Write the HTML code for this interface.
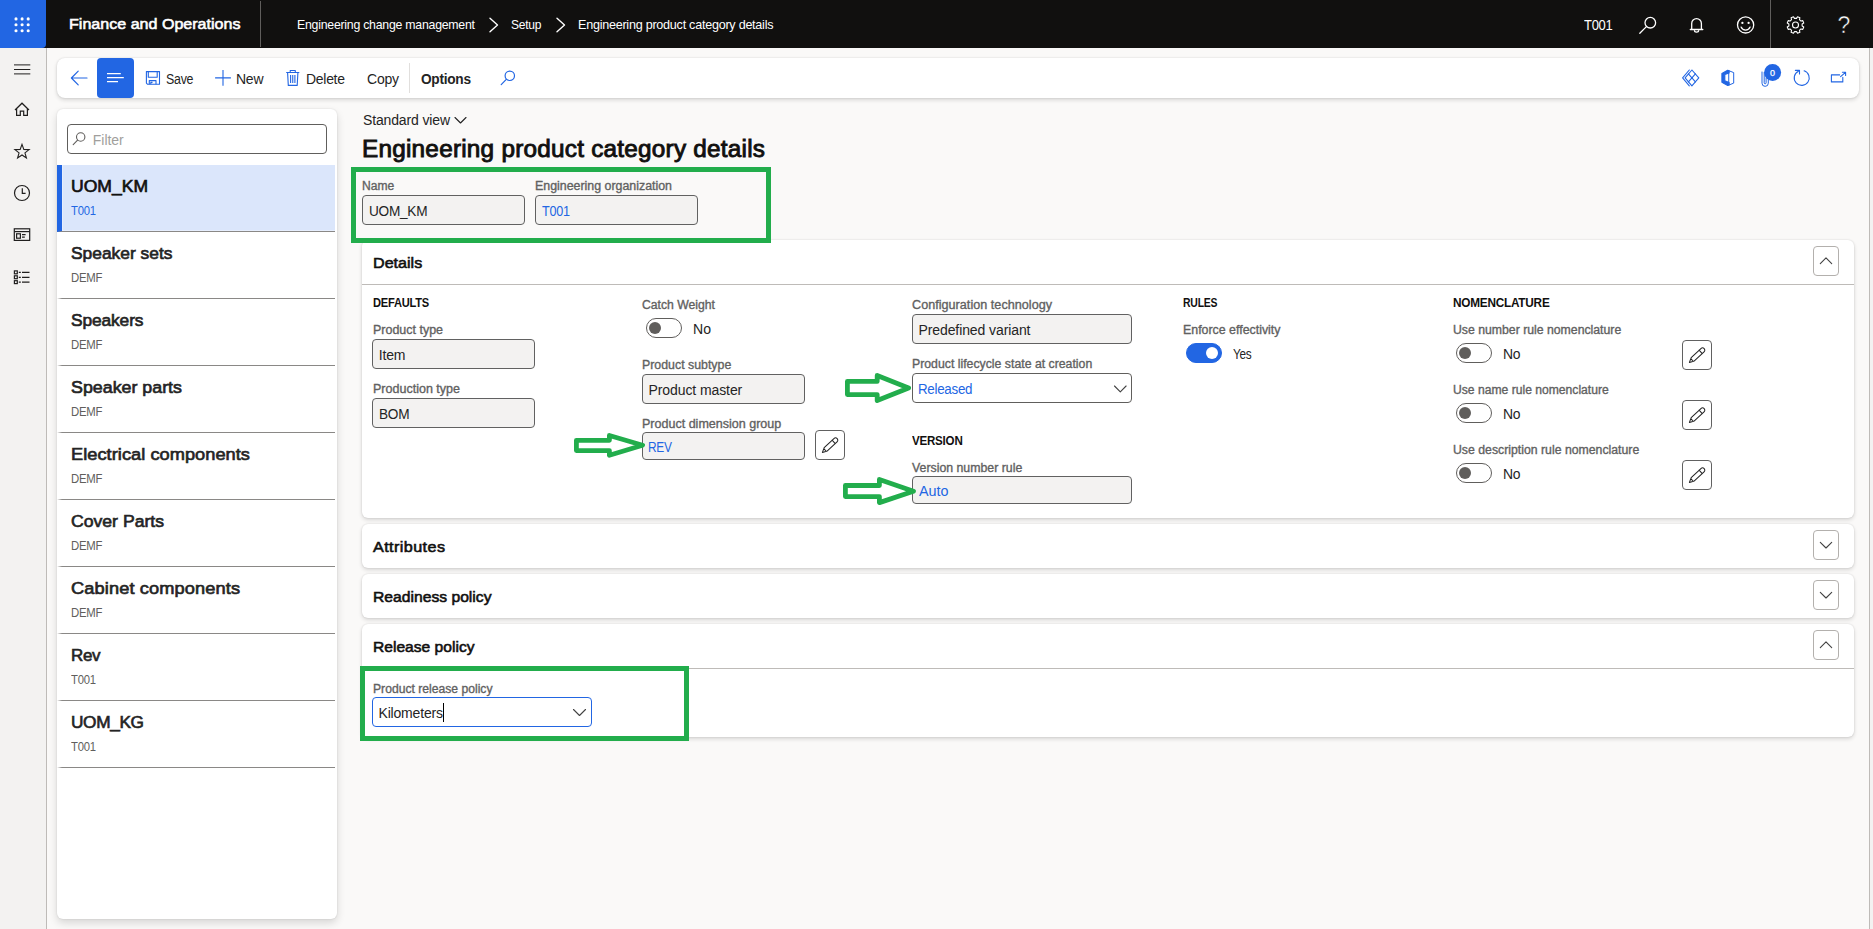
<!DOCTYPE html>
<html lang="en"><head><meta charset="utf-8"><title>Engineering product category details - Finance and Operations</title>
<style>
*{box-sizing:border-box;margin:0;padding:0}
html,body{width:1873px;height:929px;overflow:hidden}
body{position:relative;background:#faf9f8;font-family:"Liberation Sans",sans-serif;color:#242424}
.a{position:absolute}
.t{position:absolute;white-space:pre;display:block}
#hdr{left:0;top:0;width:1873px;height:48px;background:#11100f}
#waffle{left:0;top:0;width:46px;height:48px;background:#2266e3;border-radius:0 0 4px 0}
#nav{left:0;top:48px;width:47px;height:881px;background:#f3f2f1;border-right:1px solid #bebbb8}
#gutter{left:1869px;top:48px;width:4px;height:881px;background:#f3f2f1;border-left:1px solid #bebbb8}
.card{background:#fff;border-radius:6px;box-shadow:0 0 2px rgba(0,0,0,.12),0 2px 4px rgba(0,0,0,.14)}
.inp{border:1px solid #616161;border-radius:4px;background:#f3f2f1}
.cmb{border:1px solid #605e5c;border-radius:4px;background:#fff}
.btn{border:1px solid #616161;border-radius:4px;background:#fff}
.hbtn{border:1px solid #b3b0ad;border-radius:4px;background:#fff;width:26px;height:30px;left:1813px}
.li{left:57px;width:278px;height:67px;border-left:5px solid transparent;border-bottom:1px solid #8a8886}
.li.sel{border-left-color:#2266e3;background:#dbe6fb;box-shadow:inset 1px 0 0 #e6eefd,inset 0 -1px 0 #e6eefd}
.hl{height:1px;background:#bebbb8;left:362px;width:1492px}
.tg{width:36px;height:20px;border-radius:10px;border:1px solid #605e5c;background:#fff}
.tg i{position:absolute;left:2px;top:3px;width:12px;height:12px;border-radius:6px;background:#605e5c}
.tg.on{background:#2266e3;border-color:#2266e3}
.tg.on i{left:19px;background:#fff}
.gbox{border:5px solid #22ad4c}
svg{position:absolute;left:0;top:0;overflow:visible}

</style></head>
<body>
<div class="a" id="hdr"></div>
<div class="a" id="waffle"></div>
<div class="a" style="left:260px;top:1px;width:1px;height:46px;background:#605e5c"></div>
<div class="a" style="left:1770px;top:0;width:1px;height:48px;background:#605e5c"></div>
<div class="a" id="nav"></div>
<div class="a" id="gutter"></div>

<!-- toolbar -->
<div class="a card" style="left:57px;top:58px;width:1802px;height:40px;border-radius:8px"></div>
<div class="a" style="left:97px;top:58px;width:37px;height:40px;background:#2266e3;border-radius:4px"></div>
<div class="a" style="left:409px;top:63px;width:1px;height:30px;background:#e1dfdd"></div>

<!-- list panel -->
<div class="a card" style="left:57px;top:109px;width:280px;height:810px;box-shadow:0 0 2px rgba(0,0,0,.12),0 4px 8px rgba(0,0,0,.14)"></div>
<div class="a" style="left:67px;top:124px;width:260px;height:30px;border:1px solid #605e5c;border-radius:4px;background:#fff"></div>
<div class="a li sel" style="top:165px"></div>
<div class="a li" style="top:232px"></div>
<div class="a li" style="top:299px"></div>
<div class="a li" style="top:366px"></div>
<div class="a li" style="top:433px"></div>
<div class="a li" style="top:500px"></div>
<div class="a li" style="top:567px"></div>
<div class="a li" style="top:634px"></div>
<div class="a li" style="top:701px"></div>

<!-- header fields -->
<div class="a inp" style="left:362px;top:195px;width:163px;height:30px"></div>
<div class="a inp" style="left:535px;top:195px;width:163px;height:30px"></div>

<!-- Details card -->
<div class="a card" style="left:362px;top:240px;width:1492px;height:278px"></div>
<div class="a hl" style="top:284px"></div>
<div class="a hbtn" style="top:246px"></div>
<!-- col1 -->
<div class="a inp" style="left:372px;top:339px;width:163px;height:30px"></div>
<div class="a inp" style="left:372px;top:398px;width:163px;height:30px"></div>
<!-- col2 -->
<div class="a tg" style="left:646px;top:318px"><i></i></div>
<div class="a inp" style="left:642px;top:374px;width:163px;height:30px"></div>
<div class="a inp" style="left:642px;top:432px;width:163px;height:28px"></div>
<div class="a btn" style="left:815px;top:430px;width:30px;height:30px"></div>
<!-- col3 -->
<div class="a inp" style="left:912px;top:314px;width:220px;height:30px"></div>
<div class="a cmb" style="left:912px;top:373px;width:220px;height:30px"></div>
<div class="a inp" style="left:912px;top:476px;width:220px;height:28px"></div>
<!-- col4 -->
<div class="a tg on" style="left:1186px;top:343px"><i></i></div>
<!-- col5 -->
<div class="a tg" style="left:1456px;top:343px"><i></i></div>
<div class="a tg" style="left:1456px;top:403px"><i></i></div>
<div class="a tg" style="left:1456px;top:463px"><i></i></div>
<div class="a btn" style="left:1682px;top:340px;width:30px;height:30px"></div>
<div class="a btn" style="left:1682px;top:400px;width:30px;height:30px"></div>
<div class="a btn" style="left:1682px;top:460px;width:30px;height:30px"></div>

<!-- Attributes / Readiness / Release -->
<div class="a card" style="left:362px;top:524px;width:1492px;height:44px"></div>
<div class="a hbtn" style="top:530px"></div>
<div class="a card" style="left:362px;top:574px;width:1492px;height:44px"></div>
<div class="a hbtn" style="top:580px"></div>
<div class="a card" style="left:362px;top:624px;width:1492px;height:113px"></div>
<div class="a hbtn" style="top:630px"></div>
<div class="a hl" style="top:668px"></div>
<div class="a" style="left:372px;top:697px;width:220px;height:30px;border:1px solid #2266e3;border-radius:4px;background:#fff"></div>
<div class="a" style="left:443px;top:703px;width:1px;height:19px;background:#000"></div>

<!-- green annotation boxes -->
<div class="a gbox" style="left:351px;top:167px;width:420px;height:75.5px"></div>
<div class="a gbox" style="left:360px;top:666px;width:329px;height:75px"></div>

<!-- ICONS -->
<svg width="1873" height="929" viewBox="0 0 1873 929" fill="none">
<!-- waffle -->
<g fill="#fff">
<circle cx="16" cy="18.9" r="1.55"/><circle cx="22.1" cy="18.9" r="1.55"/><circle cx="28.2" cy="18.9" r="1.55"/>
<circle cx="16" cy="24.8" r="1.55"/><circle cx="22.1" cy="24.8" r="1.55"/><circle cx="28.2" cy="24.8" r="1.55"/>
<circle cx="16" cy="30.7" r="1.55"/><circle cx="22.1" cy="30.7" r="1.55"/><circle cx="28.2" cy="30.7" r="1.55"/>
</g>
<!-- breadcrumb chevrons -->
<g stroke="#fff" stroke-width="1.4" stroke-linecap="round" stroke-linejoin="round">
<path d="M490 18.3 L497.5 25 L490 31.7"/>
<path d="M557 18.3 L564.5 25 L557 31.7"/>
</g>
<!-- header icons -->
<g stroke="#fff" stroke-width="1.3" stroke-linecap="round" stroke-linejoin="round">
<circle cx="1650.3" cy="22.7" r="5.3"/><path d="M1646.4 26.6 L1639.8 33.2"/>
<path d="M1691.7 29.4 V23.5 a4.85 4.85 0 0 1 9.7 0 V29.4 M1690.3 29.5 H1702.8"/><path d="M1694.5 30.6 a2.05 1.6 0 0 0 4.1 0"/>
<circle cx="1745.6" cy="24.9" r="8.1"/>
<path d="M1741.1 27.1 a4.9 4.9 0 0 0 9 0"/>
</g>
<g fill="#fff"><circle cx="1742.4" cy="22.9" r="1.15"/><circle cx="1748.6" cy="22.9" r="1.15"/></g>
<!-- gear -->
<g stroke="#fff" stroke-width="1.1" stroke-linejoin="round">
<circle cx="1795.5" cy="25" r="3"/>
<path d="M1802.12 26.02 L1803.75 27.04 L1802.78 29.39 L1800.90 28.96 L1799.46 30.40 L1799.89 32.28 L1797.54 33.25 L1796.52 31.62 L1794.48 31.62 L1793.46 33.25 L1791.11 32.28 L1791.54 30.40 L1790.10 28.96 L1788.22 29.39 L1787.25 27.04 L1788.88 26.02 L1788.88 23.98 L1787.25 22.96 L1788.22 20.61 L1790.10 21.04 L1791.54 19.60 L1791.11 17.72 L1793.46 16.75 L1794.48 18.38 L1796.52 18.38 L1797.54 16.75 L1799.89 17.72 L1799.46 19.60 L1800.90 21.04 L1802.78 20.61 L1803.75 22.96 L1802.12 23.98 Z"/>
</g>
<!-- nav icons -->
<g stroke="#201f1e" stroke-width="1">
<path d="M14 64.9h16.3M14 69.5h16.3M14 73.9h16.3"/>
</g>
<g stroke="#201f1e" stroke-width="1.2" stroke-linejoin="miter">
<path d="M15 110 L22 103.2 L29 110"/>
<path d="M16.6 108.6 V115.4 H20.3 V111.2 H23.7 V115.4 H27.4 V108.6"/>
<path d="M22.00 144.40 L23.82 149.39 L29.13 149.58 L24.95 152.86 L26.41 157.97 L22.00 155.00 L17.59 157.97 L19.05 152.86 L14.87 149.58 L20.18 149.39 Z" stroke-width="1.1"/>
<circle cx="22" cy="193" r="7.5"/>
<path d="M22.3 188.2 V193.3 H25.6"/>
<rect x="14.3" y="228.8" width="15.4" height="11.6"/>
<path d="M14.3 231.6 H29.7"/>
<rect x="16.6" y="233.8" width="3.8" height="4.4"/>
<path d="M22 234.6 H25.6 M22 237.2 H24.8"/>
<rect x="14.4" y="270.9" width="2.9" height="2.9"/><rect x="14.4" y="275.8" width="2.9" height="2.9"/><rect x="14.4" y="280.7" width="2.9" height="2.9"/>
<path d="M18.8 272.4 H20.8 M22 272.4 H29.5 M18.8 277.3 H20.8 M22 277.3 H29.5 M18.8 282.2 H20.8 M22 282.2 H29.5"/>
</g>
<!-- toolbar left icons -->
<g stroke="#2266e3" stroke-width="1.2" stroke-linecap="round" stroke-linejoin="round">
<path d="M87 78 H71.5 M78.2 71.2 L71.4 78 L78.2 84.8"/>
</g>
<g stroke="#fff" stroke-width="1.1">
<path d="M107 73.6 H120.8 M107 77.6 H123.8 M107 81.6 H118"/>
</g>
<g stroke="#2266e3" stroke-width="1.1" stroke-linejoin="round">
<path d="M146.4 71.6 H159.5 V84.3 H147.6 L146.4 83.1 Z"/>
<path d="M148.3 71.6 V77.3 H157.2 V71.6"/>
<path d="M149.3 84.3 V80.6 H156 V84.3 M150.8 84.3 V82.4 H152.5"/>
<path d="M223 70 V85.8 M215.1 77.9 H230.9"/>
<path d="M286.2 72.5 H299.3 M290.2 72.3 V70.5 H295.3 V72.3 M287.6 72.6 L288.3 85.4 H297.2 L297.9 72.6 M290.6 75 V83 M292.75 75 V83 M294.9 75 V83"/>
</g>
<!-- toolbar search -->
<g stroke="#2266e3" stroke-width="1.2" stroke-linecap="round"><circle cx="509.8" cy="75.8" r="4.7"/><path d="M506.3 79.4 L501.2 84.6"/></g>
<!-- filter search -->
<g stroke="#605e5c" stroke-width="1.1" stroke-linecap="round"><circle cx="80.7" cy="137" r="4.2"/><path d="M77.6 140.1 L73.2 144.6"/></g>
<!-- toolbar right icons -->
<g stroke="#2266e3" stroke-width="1.1" stroke-linejoin="round" stroke-linecap="round">
<path d="M1689.3 70 L1682.6 77.9 L1689.3 85.8"/>
<path d="M1691.9 70 L1698.8 77.9 L1691.9 85.8 L1685.1 77.9 Z"/>
<path d="M1688.4 73.9 L1695.4 81.9 M1695.4 73.9 L1688.4 81.9"/>
<path d="M1721.9 73.6 L1727.7 70.3 L1729.1 70.8 V73 L1724.8 74.6 V80.8 L1729.1 82.4 V85 L1727.7 85.5 L1721.9 82.3 Z" fill="#2266e3"/>
<path d="M1729.1 70.8 L1733.7 72.6 V83.1 L1729.1 85 Z" stroke-width="1"/>
<path d="M1762 72 V83.2 a3.15 3.15 0 0 0 6.3 0 V79" stroke-width="1"/>
<path d="M1764.2 72.5 V82.8 a0.95 0.95 0 0 0 1.9 0 V78" stroke-width="1"/>
<path d="M1804.1 70.8 A7.5 7.5 0 1 1 1798.4 71.2"/>
<path d="M1795.4 70.4 H1799.5 V74" />
<path d="M1839.6 74.9 H1831.4 V81.9 H1842.8 V77.4"/>
<path d="M1840.6 76.7 L1845.5 72.3 M1842.4 72.3 H1845.6 V75.4"/>
</g>
<circle cx="1772.6" cy="72.5" r="8.5" fill="#2266e3"/>
<!-- standard view chevron -->
<g stroke="#242424" stroke-width="1.1" stroke-linecap="round" stroke-linejoin="round">
<path d="M455 117.5 L460.5 123 L466 117.5"/>
</g>
<!-- section chevrons -->
<g stroke="#424242" stroke-width="1.1" stroke-linecap="round" stroke-linejoin="round">
<path d="M1820.3 263.6 L1826 257.9 L1831.7 263.6"/>
<path d="M1820.3 542.3 L1826 548 L1831.7 542.3"/>
<path d="M1820.3 592.3 L1826 598 L1831.7 592.3"/>
<path d="M1820.3 647.6 L1826 641.9 L1831.7 647.6"/>
<path d="M1114.5 386 L1120.3 391.8 L1126.1 386"/>
<path d="M573.5 709.5 L579.5 715.5 L585.5 709.5"/>
</g>
<!-- pencils -->
<g stroke="#242424" stroke-width="1.05" stroke-linejoin="round" stroke-linecap="round">
<g transform="translate(822.4 452.4) rotate(-43)"><path d="M0 0 L4.6 -2.3 H17.9 A2.3 2.3 0 0 1 17.9 2.3 H4.6 Z M3.6 -1.8 V1.8 M15.4 -2.3 V2.3"/></g>
<g transform="translate(1689.4 362.4) rotate(-43)"><path d="M0 0 L4.6 -2.3 H17.9 A2.3 2.3 0 0 1 17.9 2.3 H4.6 Z M3.6 -1.8 V1.8 M15.4 -2.3 V2.3"/></g>
<g transform="translate(1689.4 422.4) rotate(-43)"><path d="M0 0 L4.6 -2.3 H17.9 A2.3 2.3 0 0 1 17.9 2.3 H4.6 Z M3.6 -1.8 V1.8 M15.4 -2.3 V2.3"/></g>
<g transform="translate(1689.4 482.4) rotate(-43)"><path d="M0 0 L4.6 -2.3 H17.9 A2.3 2.3 0 0 1 17.9 2.3 H4.6 Z M3.6 -1.8 V1.8 M15.4 -2.3 V2.3"/></g>
</g>
<!-- green arrows -->
<g stroke="#22ad4c" stroke-width="4.8" stroke-linejoin="round" fill="none">
<path d="M576.4 440.3 H609.4 V435.5 L642.6 445.2 L609.4 455.2 V450.6 H576.4 Z"/>
<path d="M847.4 381.4 H877.2 V375.4 L908.6 388 L877.2 400.6 V394.6 H847.4 Z"/>
<path d="M845.4 485.5 H879.4 V479.5 L913.5 491.2 L879.4 502.6 V496.6 H845.4 Z"/>
</g>
</svg>
<span class="t" style="left:1837.6px;top:11.6px;font-size:23px;line-height:27px;color:#fff;-webkit-text-stroke:0.45px #11100f">?</span>

<!-- text layer -->
<span class="t" style="left:68.5px;top:14.00px;font-size:15.44px;line-height:20px;letter-spacing:0.000px;color:#ffffff;-webkit-text-stroke:0.59px;transform:scaleX(1.0408);transform-origin:0 0;">Finance and Operations</span>
<span class="t" style="left:297px;top:16.00px;font-size:13px;line-height:17px;letter-spacing:-0.260px;color:#ffffff;transform:scaleX(0.9475);transform-origin:0 0;">Engineering change management</span>
<span class="t" style="left:511px;top:16.00px;font-size:13px;line-height:17px;letter-spacing:-0.260px;color:#ffffff;transform:scaleX(0.9258);transform-origin:0 0;">Setup</span>
<span class="t" style="left:578px;top:16.00px;font-size:13px;line-height:17px;letter-spacing:-0.260px;color:#ffffff;transform:scaleX(0.9682);transform-origin:0 0;">Engineering product category details</span>
<span class="t" style="left:1583.5px;top:16.00px;font-size:14px;line-height:18px;letter-spacing:-0.280px;color:#ffffff;transform:scaleX(0.9266);transform-origin:0 0;">T001</span>
<span class="t" style="left:165.5px;top:70.00px;font-size:14px;line-height:18px;letter-spacing:-0.280px;color:#242424;transform:scaleX(0.8848);transform-origin:0 0;">Save</span>
<span class="t" style="left:236px;top:70.00px;font-size:14px;line-height:18px;letter-spacing:-0.258px;color:#242424;">New</span>
<span class="t" style="left:306px;top:70.00px;font-size:14px;line-height:18px;letter-spacing:-0.280px;color:#242424;transform:scaleX(0.9982);transform-origin:0 0;">Delete</span>
<span class="t" style="left:367px;top:70.00px;font-size:14px;line-height:18px;letter-spacing:-0.229px;color:#242424;">Copy</span>
<span class="t" style="left:421px;top:70.00px;font-size:14px;line-height:18px;letter-spacing:-0.280px;color:#242424;font-weight:700;transform:scaleX(0.9764);transform-origin:0 0;">Options</span>
<span class="t" style="left:1770px;top:67.00px;font-size:9.0px;line-height:12px;letter-spacing:0.000px;color:#ffffff;-webkit-text-stroke:0.25px;">0</span>
<span class="t" style="left:92.8px;top:131.00px;font-size:14px;line-height:18px;letter-spacing:-0.025px;color:#a19f9d;">Filter</span>
<span class="t" style="left:71px;top:175.00px;font-size:17.37px;line-height:23px;letter-spacing:0.000px;color:#11100f;-webkit-text-stroke:0.66px;transform:scaleX(1.0105);transform-origin:0 0;">UOM_KM</span>
<span class="t" style="left:71px;top:203.00px;font-size:12px;line-height:16px;letter-spacing:-0.240px;color:#2266e3;transform:scaleX(0.9385);transform-origin:0 0;">T001</span>
<span class="t" style="left:71px;top:242.00px;font-size:17.37px;line-height:23px;letter-spacing:0.000px;color:#242424;-webkit-text-stroke:0.66px;transform:scaleX(1.0017);transform-origin:0 0;">Speaker sets</span>
<span class="t" style="left:71px;top:270.00px;font-size:12px;line-height:16px;letter-spacing:-0.240px;color:#605e5c;transform:scaleX(0.9465);transform-origin:0 0;">DEMF</span>
<span class="t" style="left:71px;top:309.00px;font-size:17.37px;line-height:23px;letter-spacing:-0.121px;color:#242424;-webkit-text-stroke:0.66px;">Speakers</span>
<span class="t" style="left:71px;top:337.00px;font-size:12px;line-height:16px;letter-spacing:-0.240px;color:#605e5c;transform:scaleX(0.9465);transform-origin:0 0;">DEMF</span>
<span class="t" style="left:71px;top:376.00px;font-size:17.37px;line-height:23px;letter-spacing:0.000px;color:#242424;-webkit-text-stroke:0.66px;transform:scaleX(1.0270);transform-origin:0 0;">Speaker parts</span>
<span class="t" style="left:71px;top:404.00px;font-size:12px;line-height:16px;letter-spacing:-0.240px;color:#605e5c;transform:scaleX(0.9465);transform-origin:0 0;">DEMF</span>
<span class="t" style="left:71px;top:443.00px;font-size:17.37px;line-height:23px;letter-spacing:0.032px;color:#242424;-webkit-text-stroke:0.66px;transform:scaleX(1.0500);transform-origin:0 0;">Electrical components</span>
<span class="t" style="left:71px;top:471.00px;font-size:12px;line-height:16px;letter-spacing:-0.240px;color:#605e5c;transform:scaleX(0.9465);transform-origin:0 0;">DEMF</span>
<span class="t" style="left:71px;top:510.00px;font-size:17.37px;line-height:23px;letter-spacing:0.000px;color:#242424;-webkit-text-stroke:0.66px;transform:scaleX(1.0147);transform-origin:0 0;">Cover Parts</span>
<span class="t" style="left:71px;top:538.00px;font-size:12px;line-height:16px;letter-spacing:-0.240px;color:#605e5c;transform:scaleX(0.9465);transform-origin:0 0;">DEMF</span>
<span class="t" style="left:71px;top:577.00px;font-size:17.37px;line-height:23px;letter-spacing:0.101px;color:#242424;-webkit-text-stroke:0.66px;transform:scaleX(1.0500);transform-origin:0 0;">Cabinet components</span>
<span class="t" style="left:71px;top:605.00px;font-size:12px;line-height:16px;letter-spacing:-0.240px;color:#605e5c;transform:scaleX(0.9465);transform-origin:0 0;">DEMF</span>
<span class="t" style="left:71px;top:644.00px;font-size:17.37px;line-height:23px;letter-spacing:-0.347px;color:#242424;-webkit-text-stroke:0.66px;transform:scaleX(0.9775);transform-origin:0 0;">Rev</span>
<span class="t" style="left:71px;top:672.00px;font-size:12px;line-height:16px;letter-spacing:-0.240px;color:#605e5c;transform:scaleX(0.9385);transform-origin:0 0;">T001</span>
<span class="t" style="left:71px;top:711.00px;font-size:17.37px;line-height:23px;letter-spacing:-0.347px;color:#242424;-webkit-text-stroke:0.66px;transform:scaleX(0.9930);transform-origin:0 0;">UOM_KG</span>
<span class="t" style="left:71px;top:739.00px;font-size:12px;line-height:16px;letter-spacing:-0.240px;color:#605e5c;transform:scaleX(0.9385);transform-origin:0 0;">T001</span>
<span class="t" style="left:363px;top:111.00px;font-size:14px;line-height:18px;letter-spacing:-0.143px;color:#242424;">Standard view</span>
<span class="t" style="left:362px;top:134.00px;font-size:23.16px;line-height:30px;letter-spacing:0.226px;color:#11100f;-webkit-text-stroke:0.88px;transform:scaleX(1.0500);transform-origin:0 0;">Engineering product category details</span>
<span class="t" style="left:362.3px;top:178.00px;font-size:12.0px;line-height:16px;letter-spacing:0.000px;color:#616161;-webkit-text-stroke:0.34px;transform:scaleX(1.0058);transform-origin:0 0;">Name</span>
<span class="t" style="left:535px;top:178.00px;font-size:12.0px;line-height:16px;letter-spacing:0.000px;color:#616161;-webkit-text-stroke:0.34px;transform:scaleX(1.0319);transform-origin:0 0;">Engineering organization</span>
<span class="t" style="left:368.5px;top:202.00px;font-size:14px;line-height:18px;letter-spacing:-0.280px;color:#242424;transform:scaleX(0.9741);transform-origin:0 0;">UOM_KM</span>
<span class="t" style="left:542px;top:202.00px;font-size:14px;line-height:18px;letter-spacing:-0.280px;color:#2266e3;transform:scaleX(0.9008);transform-origin:0 0;">T001</span>
<span class="t" style="left:372.5px;top:253.00px;font-size:15.44px;line-height:20px;letter-spacing:0.000px;color:#11100f;-webkit-text-stroke:0.59px;transform:scaleX(1.0437);transform-origin:0 0;">Details</span>
<span class="t" style="left:372.5px;top:537.00px;font-size:15.44px;line-height:20px;letter-spacing:0.373px;color:#11100f;-webkit-text-stroke:0.59px;transform:scaleX(1.0500);transform-origin:0 0;">Attributes</span>
<span class="t" style="left:372.5px;top:587.00px;font-size:15.44px;line-height:20px;letter-spacing:0.000px;color:#11100f;-webkit-text-stroke:0.59px;transform:scaleX(1.0154);transform-origin:0 0;">Readiness policy</span>
<span class="t" style="left:372.5px;top:637.00px;font-size:15.44px;line-height:20px;letter-spacing:0.000px;color:#11100f;-webkit-text-stroke:0.59px;transform:scaleX(1.0109);transform-origin:0 0;">Release policy</span>
<span class="t" style="left:372.5px;top:295.00px;font-size:12px;line-height:16px;letter-spacing:-0.240px;color:#11100f;font-weight:700;transform:scaleX(0.9256);transform-origin:0 0;">DEFAULTS</span>
<span class="t" style="left:372.5px;top:322.00px;font-size:12.0px;line-height:16px;letter-spacing:0.000px;color:#616161;-webkit-text-stroke:0.34px;transform:scaleX(1.0390);transform-origin:0 0;">Product type</span>
<span class="t" style="left:378.75px;top:346.00px;font-size:14px;line-height:18px;letter-spacing:-0.161px;color:#242424;">Item</span>
<span class="t" style="left:372.5px;top:381.00px;font-size:12.0px;line-height:16px;letter-spacing:0.000px;color:#616161;-webkit-text-stroke:0.34px;transform:scaleX(1.0433);transform-origin:0 0;">Production type</span>
<span class="t" style="left:378.75px;top:405.00px;font-size:14px;line-height:18px;letter-spacing:-0.280px;color:#242424;transform:scaleX(0.9735);transform-origin:0 0;">BOM</span>
<span class="t" style="left:642.25px;top:297.00px;font-size:12.0px;line-height:16px;letter-spacing:0.000px;color:#616161;-webkit-text-stroke:0.34px;transform:scaleX(1.0165);transform-origin:0 0;">Catch Weight</span>
<span class="t" style="left:692.75px;top:320.00px;font-size:14px;line-height:18px;letter-spacing:0.000px;color:#242424;transform:scaleX(1.0052);transform-origin:0 0;">No</span>
<span class="t" style="left:642.25px;top:357.00px;font-size:12.0px;line-height:16px;letter-spacing:0.000px;color:#616161;-webkit-text-stroke:0.34px;transform:scaleX(1.0292);transform-origin:0 0;">Product subtype</span>
<span class="t" style="left:648.5px;top:381.00px;font-size:14px;line-height:18px;letter-spacing:-0.091px;color:#242424;">Product master</span>
<span class="t" style="left:642.25px;top:416.00px;font-size:12.0px;line-height:16px;letter-spacing:0.000px;color:#616161;-webkit-text-stroke:0.34px;transform:scaleX(1.0437);transform-origin:0 0;">Product dimension group</span>
<span class="t" style="left:648px;top:438.00px;font-size:14px;line-height:18px;letter-spacing:-0.280px;color:#2266e3;transform:scaleX(0.8500);transform-origin:0 0;">REV</span>
<span class="t" style="left:912.25px;top:297.00px;font-size:12.0px;line-height:16px;letter-spacing:0.025px;color:#616161;-webkit-text-stroke:0.34px;transform:scaleX(1.0500);transform-origin:0 0;">Configuration technology</span>
<span class="t" style="left:918.5px;top:321.00px;font-size:14px;line-height:18px;letter-spacing:-0.097px;color:#242424;">Predefined variant</span>
<span class="t" style="left:912.25px;top:356.00px;font-size:12.0px;line-height:16px;letter-spacing:0.000px;color:#616161;-webkit-text-stroke:0.34px;transform:scaleX(1.0236);transform-origin:0 0;">Product lifecycle state at creation</span>
<span class="t" style="left:918px;top:380.00px;font-size:14px;line-height:18px;letter-spacing:-0.280px;color:#2266e3;transform:scaleX(0.9529);transform-origin:0 0;">Released</span>
<span class="t" style="left:912.25px;top:433.00px;font-size:12px;line-height:16px;letter-spacing:-0.240px;color:#11100f;font-weight:700;transform:scaleX(0.9653);transform-origin:0 0;">VERSION</span>
<span class="t" style="left:912.25px;top:460.00px;font-size:12.0px;line-height:16px;letter-spacing:0.000px;color:#616161;-webkit-text-stroke:0.34px;transform:scaleX(1.0266);transform-origin:0 0;">Version number rule</span>
<span class="t" style="left:918.5px;top:482.00px;font-size:14px;line-height:18px;letter-spacing:0.000px;color:#2266e3;transform:scaleX(1.0239);transform-origin:0 0;">Auto</span>
<span class="t" style="left:1183px;top:295.00px;font-size:12px;line-height:16px;letter-spacing:-0.240px;color:#11100f;font-weight:700;transform:scaleX(0.8688);transform-origin:0 0;">RULES</span>
<span class="t" style="left:1183px;top:322.00px;font-size:12.0px;line-height:16px;letter-spacing:-0.000px;color:#616161;-webkit-text-stroke:0.34px;transform:scaleX(1.0317);transform-origin:0 0;">Enforce effectivity</span>
<span class="t" style="left:1233px;top:345.00px;font-size:14px;line-height:18px;letter-spacing:-0.280px;color:#242424;transform:scaleX(0.8414);transform-origin:0 0;">Yes</span>
<span class="t" style="left:1452.75px;top:295.00px;font-size:12px;line-height:16px;letter-spacing:-0.240px;color:#11100f;font-weight:700;transform:scaleX(0.9825);transform-origin:0 0;">NOMENCLATURE</span>
<span class="t" style="left:1452.75px;top:322.00px;font-size:12.0px;line-height:16px;letter-spacing:0.000px;color:#616161;-webkit-text-stroke:0.34px;transform:scaleX(1.0212);transform-origin:0 0;">Use number rule nomenclature</span>
<span class="t" style="left:1502.75px;top:345.00px;font-size:14px;line-height:18px;letter-spacing:-0.280px;color:#242424;transform:scaleX(0.9928);transform-origin:0 0;">No</span>
<span class="t" style="left:1452.75px;top:382.00px;font-size:12.0px;line-height:16px;letter-spacing:0.000px;color:#616161;-webkit-text-stroke:0.34px;transform:scaleX(1.0109);transform-origin:0 0;">Use name rule nomenclature</span>
<span class="t" style="left:1502.75px;top:405.00px;font-size:14px;line-height:18px;letter-spacing:-0.280px;color:#242424;transform:scaleX(0.9928);transform-origin:0 0;">No</span>
<span class="t" style="left:1452.75px;top:442.00px;font-size:12.0px;line-height:16px;letter-spacing:0.000px;color:#616161;-webkit-text-stroke:0.34px;transform:scaleX(1.0228);transform-origin:0 0;">Use description rule nomenclature</span>
<span class="t" style="left:1502.75px;top:465.00px;font-size:14px;line-height:18px;letter-spacing:-0.280px;color:#242424;transform:scaleX(0.9928);transform-origin:0 0;">No</span>
<span class="t" style="left:372.5px;top:681.00px;font-size:12.0px;line-height:16px;letter-spacing:0.000px;color:#616161;-webkit-text-stroke:0.34px;transform:scaleX(1.0122);transform-origin:0 0;">Product release policy</span>
<span class="t" style="left:378.5px;top:704.00px;font-size:14px;line-height:18px;letter-spacing:-0.182px;color:#242424;">Kilometers</span>
</body></html>
